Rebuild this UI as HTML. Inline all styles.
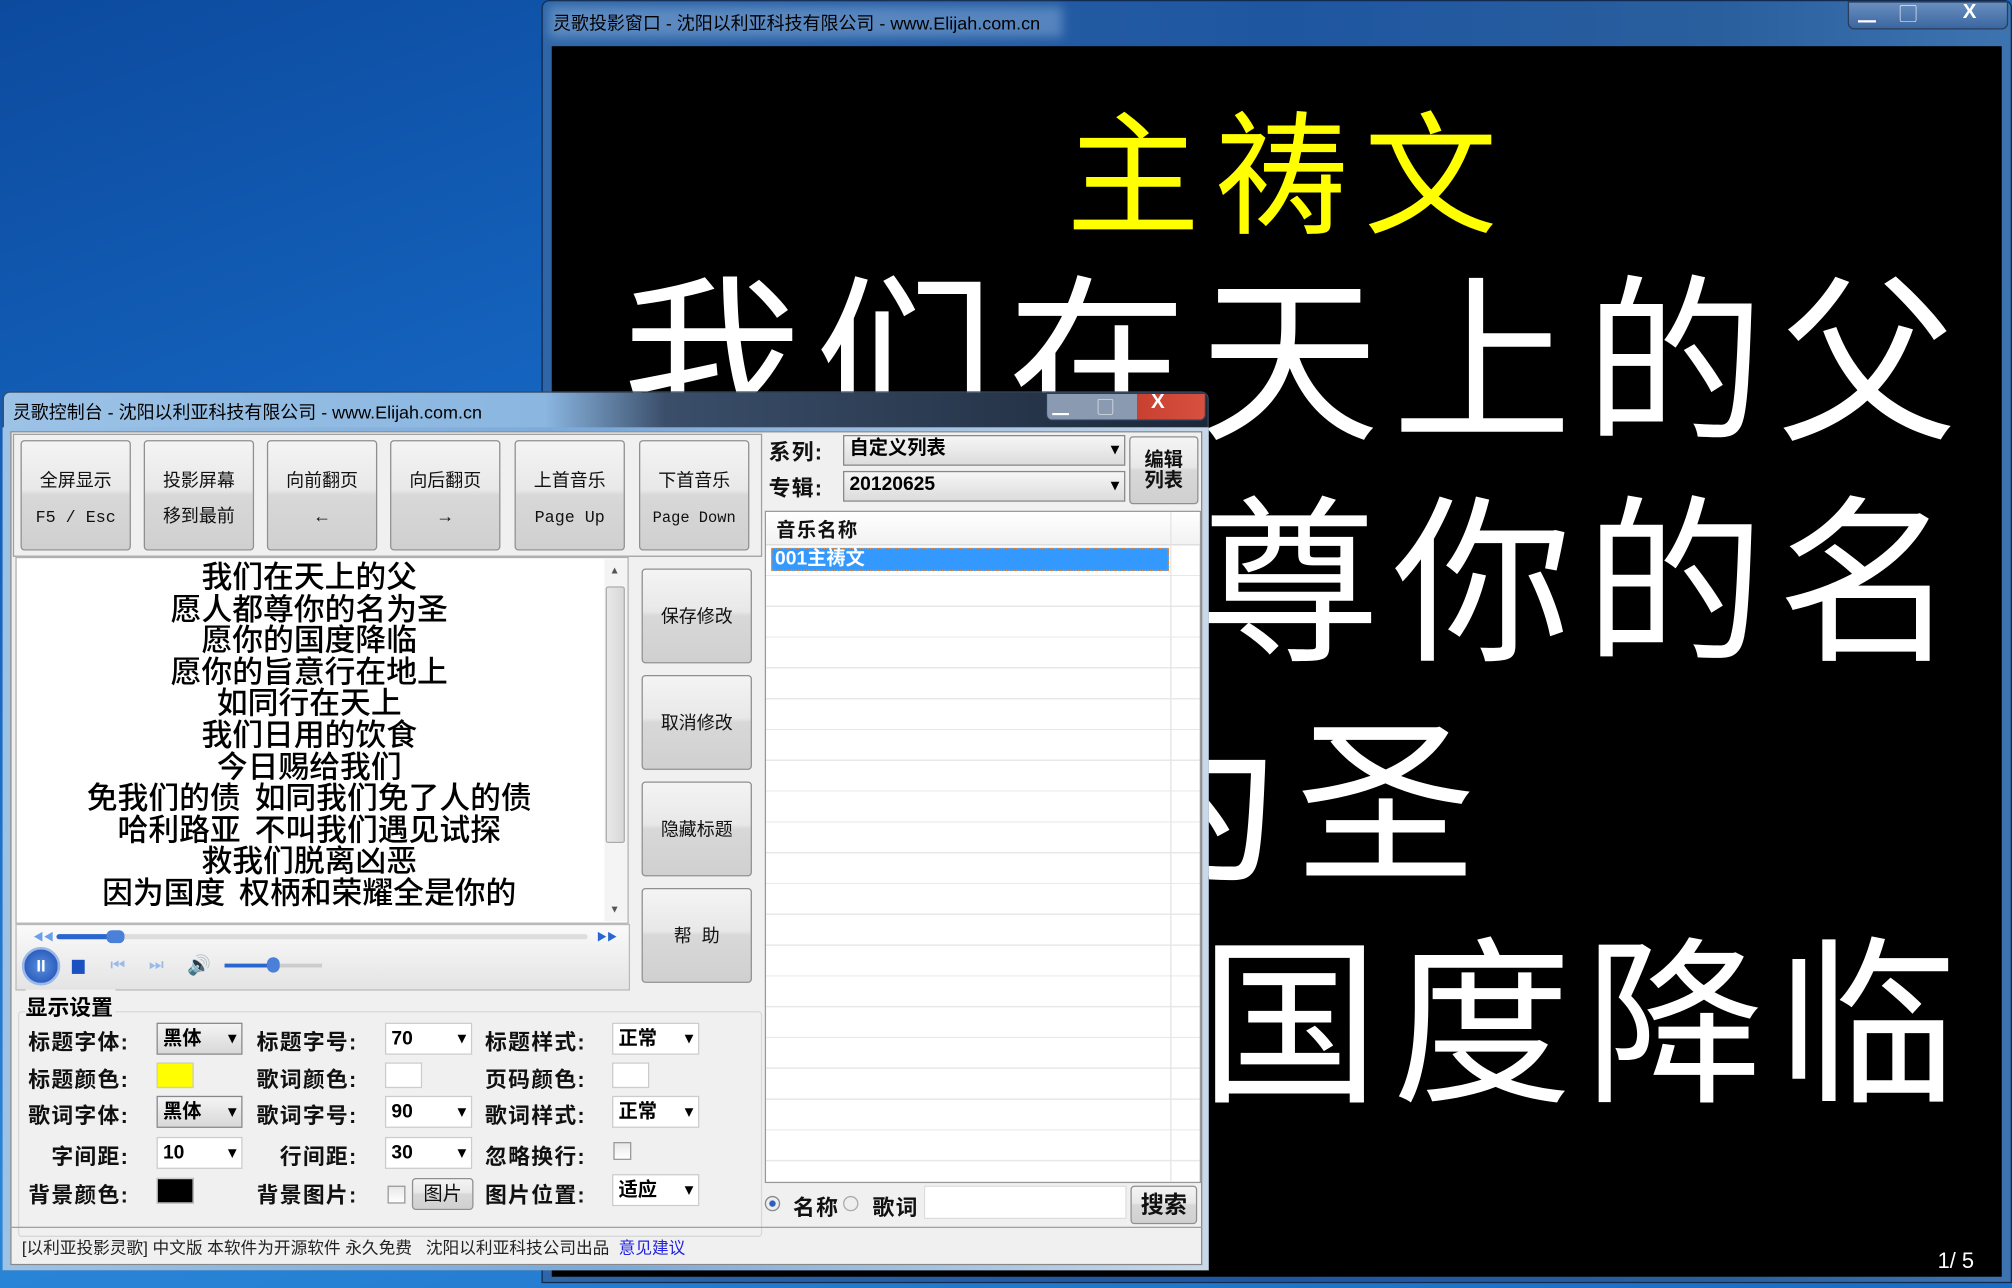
<!DOCTYPE html>
<html><head><meta charset="utf-8"><style>
*{margin:0;padding:0;box-sizing:border-box}
html,body{width:2012px;height:1288px;overflow:hidden;background:#1a6cc4}
#s{position:absolute;left:0;top:0;width:1568px;height:1004px;transform:scale(1.28316);transform-origin:0 0;font-family:"Liberation Sans","Noto Sans CJK SC",sans-serif;
background:linear-gradient(160deg,#0c4a9e 0%,#1565c0 30%,#2a86d8 60%,#1a6cc4 100%)}
.a{position:absolute}
.btn{position:absolute;background:linear-gradient(#f4f4f4,#e8e8e8 45%,#d8d8d8 50%,#d0d0d0);border:1px solid #8e8f8f;border-radius:3px;font-size:14px;color:#111;text-align:center}
.cb{position:absolute;background:#fff;border:1px solid #ccc;font-size:15px;font-weight:bold;padding-left:4px;line-height:20px}
.cb:after{content:"▾";position:absolute;right:4px;top:0;font-size:12px}
.lb{position:absolute;font-size:17px;font-weight:bold;color:#111;letter-spacing:1px}
.cap{font-size:14px;color:#000}
</style></head><body><div id="s">
<!-- projection window -->
<div class="a" style="left:422px;top:0;width:1146px;height:1000px;background:linear-gradient(90deg,#2f66a8,#1e56a0 50%,#2a5f9e 80%,#3d74b0);border:1px solid #102a50;border-radius:6px 6px 0 0"></div>
<div class="a" style="left:428px;top:5px;width:400px;height:24px;background:rgba(180,210,240,.35);filter:blur(4px)"></div>
<div class="a cap" style="left:431px;top:8px;font-size:14px">灵歌投影窗口 - 沈阳以利亚科技有限公司 - www.Elijah.com.cn</div>
<div class="a" style="left:1440px;top:1px;width:125px;height:22px;border:1px solid #2a3d5a;border-radius:0 0 5px 5px;background:linear-gradient(#6a8fbf,#3a66a0);"></div>
<div class="a" style="left:1440px;top:1px;width:30px;height:22px;color:#fff;text-align:center;font-size:14px;font-weight:bold">▁</div>
<div class="a" style="left:1472px;top:1px;width:30px;height:22px;color:#fff;text-align:center;font-size:14px">▢</div>
<div class="a" style="left:1505px;top:1px;width:60px;height:22px;color:#fff;text-align:center;font-size:16px;font-weight:bold">X</div>
<div class="a" style="left:430px;top:36px;width:1130px;height:959px;background:#000;overflow:hidden">
 <div class="a" style="left:0;width:1150px;top:28px;text-align:center;color:#ff0;font-size:104px;line-height:130px;letter-spacing:12px;font-family:'Noto Sans CJK SC',sans-serif">主祷文</div>
 <div class="a" style="left:0;top:150px;width:1160px;text-align:center;color:#fff;font-size:140px;line-height:172px;letter-spacing:10px;font-family:'Noto Sans CJK SC',sans-serif">我们在天上的父<br>愿人都尊你的名<br>为圣<br>愿你的国度降临</div>
 <div class="a" style="left:1080px;top:937px;color:#fff;font-size:17px">1/ 5</div>
</div>
<!-- control window -->
<div class="a" style="left:2px;top:305px;width:940px;height:685px;border:1px solid #3a4a60;border-radius:6px 6px 0 0;background:linear-gradient(90deg,#9cc2e6 0%,#8ab6e0 45%,#3a4e6a 55%,#1c2838 100%)"></div>
<div class="a" style="left:2px;top:333px;width:940px;height:657px;background:linear-gradient(90deg,#9cc2e6,#7aa8d8 50%,#c8d8e8)"></div>
<div class="a cap" style="left:10px;top:311px">灵歌控制台 - 沈阳以利亚科技有限公司 - www.Elijah.com.cn</div>
<div class="a" style="left:815px;top:306px;width:125px;height:22px;border:1px solid #2a3d5a;border-radius:0 0 5px 5px;background:linear-gradient(90deg,#8a9ab0 0,#8a9ab0 70px,#c84030 70px,#d85040)"></div>
<div class="a" style="left:820px;top:307px;color:#fff;font-size:13px;font-weight:bold">▁</div>
<div class="a" style="left:855px;top:307px;color:#fff;font-size:13px">▢</div>
<div class="a" style="left:897px;top:305px;color:#fff;font-size:16px;font-weight:bold">X</div>
<div class="a" style="left:8px;top:336px;width:929px;height:650px;background:#f0f0f0;border:1px solid #888"></div>
<!-- toolbar -->
<div class="a" style="left:10px;top:338px;width:584px;height:96px;border:1px solid #a0a0a0;background:#f0f0f0"></div>
<div class="btn" style="left:16px;top:343px;width:86px;height:86px;padding-top:16px;line-height:28px">全屏显示<br><span style="font-family:'Liberation Mono';font-size:13px">F5 / Esc</span></div>
<div class="btn" style="left:112px;top:343px;width:86px;height:86px;padding-top:16px;line-height:28px">投影屏幕<br>移到最前</div>
<div class="btn" style="left:208px;top:343px;width:86px;height:86px;padding-top:16px;line-height:28px">向前翻页<br>←</div>
<div class="btn" style="left:304px;top:343px;width:86px;height:86px;padding-top:16px;line-height:28px">向后翻页<br>→</div>
<div class="btn" style="left:401px;top:343px;width:86px;height:86px;padding-top:16px;line-height:28px">上首音乐<br><span style="font-family:'Liberation Mono';font-size:13px">Page Up</span></div>
<div class="btn" style="left:498px;top:343px;width:86px;height:86px;padding-top:16px;line-height:28px">下首音乐<br><span style="font-family:'Liberation Mono';font-size:12px">Page Down</span></div>
<!-- lyrics -->
<div class="a" style="left:12px;top:434px;width:478px;height:286px;background:#fff;border:1px solid #b0b0b0"></div>
<div class="a" style="left:12px;top:436px;width:458px;text-align:center;font-size:24px;line-height:24.6px;color:#000;font-family:'Noto Sans CJK SC',sans-serif;font-weight:500">我们在天上的父<br>愿人都尊你的名为圣<br>愿你的国度降临<br>愿你的旨意行在地上<br>如同行在天上<br>我们日用的饮食<br>今日赐给我们<br>免我们的债&nbsp; 如同我们免了人的债<br>哈利路亚&nbsp; 不叫我们遇见试探<br>救我们脱离凶恶<br>因为国度&nbsp; 权柄和荣耀全是你的</div>
<div class="a" style="left:471px;top:436px;width:18px;height:282px;background:#f4f4f4"></div>
<div class="a" style="left:472px;top:457px;width:15px;height:200px;background:linear-gradient(90deg,#e8e8e8,#d8d8d8);border:1px solid #aaa;border-radius:2px"></div>
<div class="a" style="left:475px;top:440px;font-size:8px;color:#555">▲</div>
<div class="a" style="left:475px;top:704px;font-size:8px;color:#555">▼</div>
<!-- player -->
<div class="a" style="left:12px;top:720px;width:479px;height:52px;background:linear-gradient(#fafafa,#e4e4e4);border:1px solid #bbb"></div>
<div class="a" style="left:44px;top:728px;width:414px;height:4px;background:#ddd;border-radius:2px"></div>
<div class="a" style="left:44px;top:728px;width:46px;height:4px;background:#2a66d0;border-radius:2px"></div>
<div class="a" style="left:83px;top:725px;width:14px;height:10px;background:#4a80d8;border-radius:4px"></div>
<div class="a" style="left:26px;top:725px;font-size:8px;color:#6aa0e8">◀◀</div>
<div class="a" style="left:465px;top:725px;font-size:8px;color:#2a66d0">▶▶</div>
<div class="a" style="left:17px;top:738px;width:30px;height:30px;border-radius:50%;background:radial-gradient(#5a90e0,#1a4ab0);border:2px solid #9ab8e8;color:#fff;font-size:13px;font-weight:bold;text-align:center;line-height:26px">II</div>
<div class="a" style="left:56px;top:748px;width:10px;height:11px;background:#1a50c0"></div>
<div class="a" style="left:86px;top:744px;font-size:13px;color:#9ab8e8">⏮</div>
<div class="a" style="left:116px;top:744px;font-size:13px;color:#9ab8e8">⏭</div>
<div class="a" style="left:146px;top:743px;font-size:15px;color:#1a50c0">🔊</div>
<div class="a" style="left:175px;top:751px;width:76px;height:3px;background:#ccc"></div>
<div class="a" style="left:175px;top:751px;width:38px;height:3px;background:#2a66d0"></div>
<div class="a" style="left:208px;top:746px;width:10px;height:12px;background:#4a80d8;border-radius:5px"></div>
<!-- side buttons -->
<div class="btn" style="left:500px;top:443px;width:86px;height:74px;line-height:72px">保存修改</div>
<div class="btn" style="left:500px;top:526px;width:86px;height:74px;line-height:72px">取消修改</div>
<div class="btn" style="left:500px;top:609px;width:86px;height:74px;line-height:72px">隐藏标题</div>
<div class="btn" style="left:500px;top:692px;width:86px;height:74px;line-height:72px">帮&nbsp; 助</div>
<!-- settings -->
<div class="a" style="left:14px;top:788px;width:580px;height:176px;border:1px solid #d8d8d8;border-radius:3px"></div>
<div class="a" style="left:20px;top:771px;font-size:17px;font-weight:bold;background:#f0f0f0;padding-right:2px">显示设置</div>
<div class="lb" style="left:22px;top:798px">标题字体:</div>
<div class="cb" style="left:122px;top:797px;width:67px;height:25px;background:linear-gradient(#f4f4f4,#d8d8d8);border-color:#888;line-height:23px">黑体</div>
<div class="lb" style="left:200px;top:798px">标题字号:</div>
<div class="cb" style="left:300px;top:797px;width:68px;height:25px;line-height:23px">70</div>
<div class="lb" style="left:378px;top:798px">标题样式:</div>
<div class="cb" style="left:477px;top:797px;width:68px;height:25px;line-height:23px">正常</div>
<div class="lb" style="left:22px;top:827px">标题颜色:</div>
<div class="a" style="left:122px;top:828px;width:29px;height:20px;background:#ff0;border:1px solid #ccc"></div>
<div class="lb" style="left:200px;top:827px">歌词颜色:</div>
<div class="a" style="left:300px;top:828px;width:29px;height:20px;background:#fff;border:1px solid #ccc"></div>
<div class="lb" style="left:378px;top:827px">页码颜色:</div>
<div class="a" style="left:477px;top:828px;width:29px;height:20px;background:#fff;border:1px solid #ccc"></div>
<div class="lb" style="left:22px;top:855px">歌词字体:</div>
<div class="cb" style="left:122px;top:854px;width:67px;height:25px;background:linear-gradient(#f4f4f4,#d8d8d8);border-color:#888;line-height:23px">黑体</div>
<div class="lb" style="left:200px;top:855px">歌词字号:</div>
<div class="cb" style="left:300px;top:854px;width:68px;height:25px;line-height:23px">90</div>
<div class="lb" style="left:378px;top:855px">歌词样式:</div>
<div class="cb" style="left:477px;top:854px;width:68px;height:25px;line-height:23px">正常</div>
<div class="lb" style="left:40px;top:887px">字间距:</div>
<div class="cb" style="left:122px;top:886px;width:67px;height:25px;line-height:23px">10</div>
<div class="lb" style="left:218px;top:887px">行间距:</div>
<div class="cb" style="left:300px;top:886px;width:68px;height:25px;line-height:23px">30</div>
<div class="lb" style="left:378px;top:887px">忽略换行:</div>
<div class="a" style="left:478px;top:890px;width:14px;height:14px;border:1px solid #999;background:linear-gradient(#e8e8e8,#fff)"></div>
<div class="lb" style="left:22px;top:917px">背景颜色:</div>
<div class="a" style="left:122px;top:918px;width:29px;height:20px;background:#000;border:1px solid #ccc"></div>
<div class="lb" style="left:200px;top:917px">背景图片:</div>
<div class="a" style="left:302px;top:924px;width:14px;height:14px;border:1px solid #999;background:linear-gradient(#e8e8e8,#fff)"></div>
<div class="btn" style="left:321px;top:918px;width:48px;height:25px;font-size:15px;line-height:23px">图片</div>
<div class="lb" style="left:378px;top:917px">图片位置:</div>
<div class="cb" style="left:477px;top:915px;width:68px;height:25px;line-height:23px">适应</div>
<!-- right panel -->
<div class="lb" style="left:599px;top:338px">系列:</div>
<div class="cb" style="left:657px;top:339px;width:220px;height:24px;background:linear-gradient(#f6f6f6,#dcdcdc);border-color:#888;font-weight:bold">自定义列表</div>
<div class="lb" style="left:599px;top:366px">专辑:</div>
<div class="cb" style="left:657px;top:367px;width:220px;height:24px;background:linear-gradient(#f6f6f6,#dcdcdc);border-color:#888">20120625</div>
<div class="btn" style="left:880px;top:340px;width:54px;height:53px;font-size:15px;font-weight:bold;line-height:16px;padding-top:10px">编辑<br>列表</div>
<div class="a" style="left:596px;top:398px;width:340px;height:524px;background:#fff;border:1px solid #999;
background-image:repeating-linear-gradient(#fff 0,#fff 23px,#e8e8e8 23px,#e8e8e8 24px);background-position:0 2px"></div>
<div class="a" style="left:597px;top:399px;width:338px;height:26px;background:linear-gradient(#fff,#f2f2f2);border-bottom:1px solid #ddd"></div>
<div class="a" style="left:912px;top:399px;width:1px;height:522px;background:#e4e4e4"></div>
<div class="lb" style="left:605px;top:402px;font-size:15px">音乐名称</div>
<div class="a" style="left:601px;top:427px;width:310px;height:18px;background:#3399ff;border:1px dotted #e89040;color:#fff;font-weight:bold;font-size:15px;line-height:16px;padding-left:2px">001主祷文</div>
<div class="a" style="left:596px;top:932px;width:12px;height:12px;border-radius:50%;border:1px solid #888;background:radial-gradient(#2a60c0 30%,#eee 40%)"></div>
<div class="lb" style="left:618px;top:927px">名称</div>
<div class="a" style="left:657px;top:932px;width:12px;height:12px;border-radius:50%;border:1px solid #aaa;background:#eee"></div>
<div class="lb" style="left:680px;top:927px">歌词</div>
<div class="a" style="left:720px;top:924px;width:158px;height:26px;background:#fff;border:1px solid #ddd"></div>
<div class="btn" style="left:881px;top:924px;width:52px;height:30px;font-size:18px;font-weight:bold;line-height:28px">搜索</div>
<!-- status -->
<div class="a" style="left:8px;top:956px;width:929px;height:1px;background:#a0a0a0"></div>
<div class="a" style="left:17px;top:962px;font-size:13px;color:#222">[以利亚投影灵歌] 中文版 本软件为开源软件 永久免费&nbsp;&nbsp; 沈阳以利亚科技公司出品&nbsp; <span style="color:#2424e0">意见建议</span></div>
</div></body></html>
